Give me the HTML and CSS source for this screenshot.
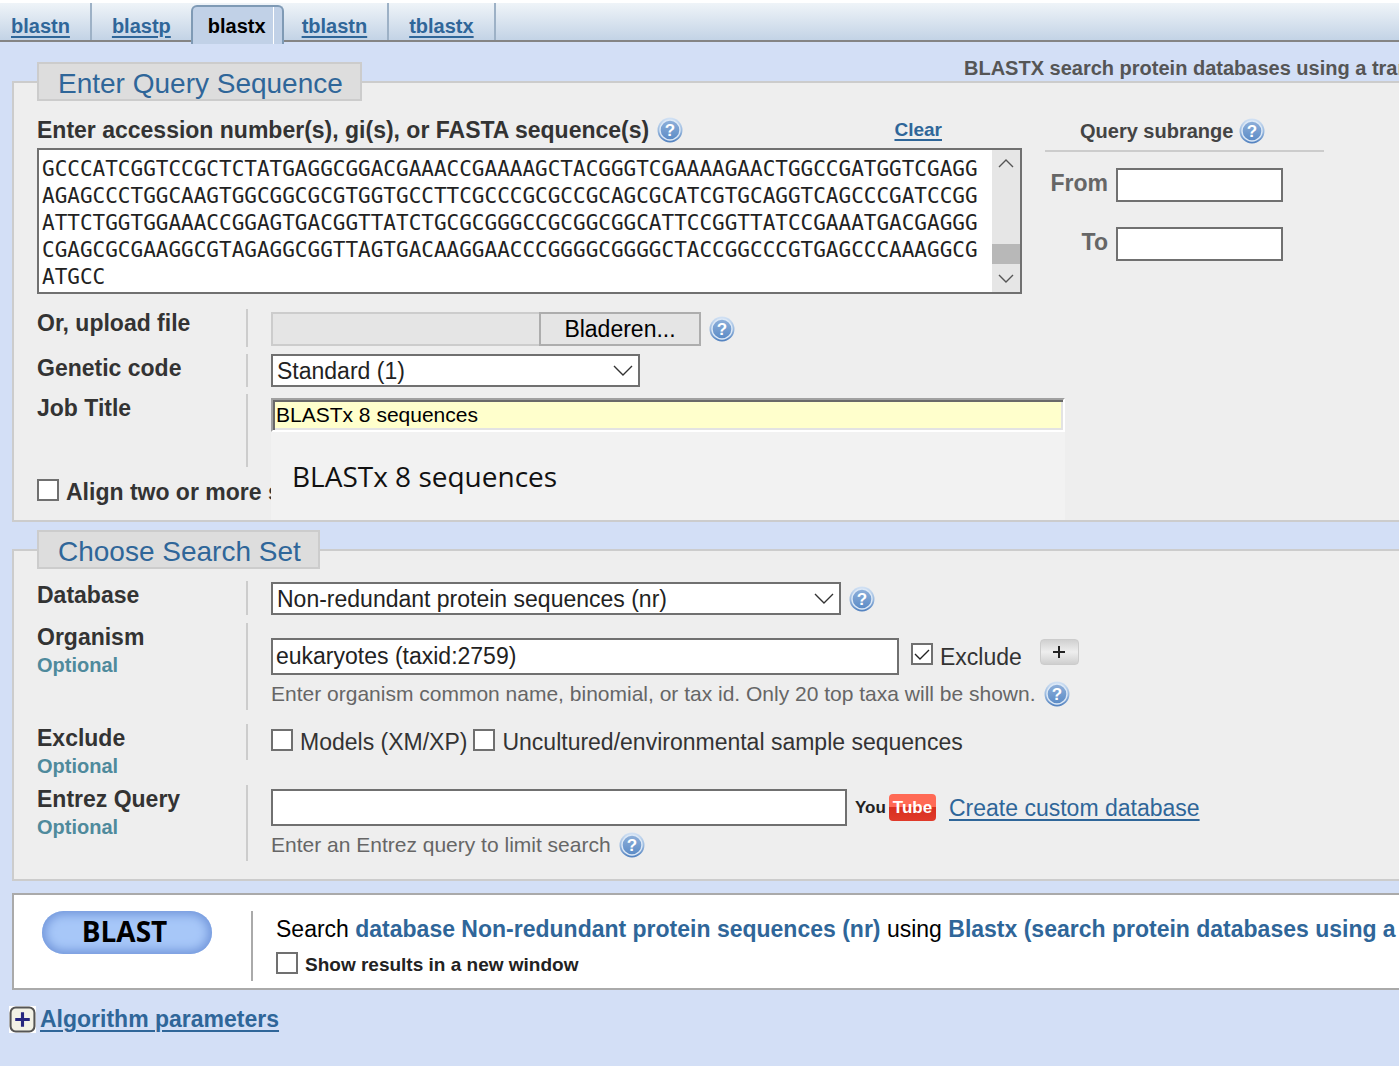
FILE: index.html
```html
<!DOCTYPE html>
<html lang="en">
<head>
<meta charset="utf-8">
<title>BLASTX search</title>
<link rel="stylesheet" href="styles.css">
</head>
<body>
<svg class="defs" aria-hidden="true">
  <defs>
    <linearGradient id="ring" x1="0" y1="0" x2="0" y2="1">
      <stop offset="0" stop-color="#d3e2f4"/><stop offset=".5" stop-color="#9dbce0"/><stop offset="1" stop-color="#4f7fbe"/>
    </linearGradient>
    <linearGradient id="disc" x1="0" y1="0" x2="0" y2="1">
      <stop offset="0" stop-color="#8fb0da"/><stop offset="1" stop-color="#5b8bc6"/>
    </linearGradient>
    <symbol id="help" viewBox="0 0 26 26">
      <circle cx="13" cy="13" r="12.5" fill="url(#ring)"/>
      <circle cx="13" cy="13" r="10" fill="url(#disc)" stroke="#dce8f6" stroke-width="1.4"/>
      <text x="13" y="19" text-anchor="middle" class="help-mark">?</text>
    </symbol>
  </defs>
</svg>

<nav class="tabs">
  <a class="tab" href="#blastn">blastn</a>
  <a class="tab tab-before" href="#blastp">blastp</a>
  <a class="tab tab-active" href="#blastx">blastx</a>
  <a class="tab tab-after" href="#tblastn">tblastn</a>
  <a class="tab" href="#tblastx">tblastx</a>
</nav>

<form class="page">
  <p class="note">BLASTX search protein databases using a translated nucleotide query</p>

  <fieldset class="section">
    <legend>Enter Query Sequence</legend>
    <div class="query">
      <div class="query-main">
        <div class="query-head">
          <label for="seq">Enter accession number(s), gi(s), or FASTA sequence(s)</label>
          <svg class="help"><use href="#help"/></svg>
          <a class="clear" href="#clear">Clear</a>
        </div>
        <div class="seq-box">
          <textarea id="seq" spellcheck="false">GCCCATCGGTCCGCTCTATGAGGCGGACGAAACCGAAAAGCTACGGGTCGAAAAGAACTGGCCGATGGTCGAGG
AGAGCCCTGGCAAGTGGCGGCGCGTGGTGCCTTCGCCCGCGCCGCAGCGCATCGTGCAGGTCAGCCCGATCCGG
ATTCTGGTGGAAACCGGAGTGACGGTTATCTGCGCGGGCCGCGGCGGCATTCCGGTTATCCGAAATGACGAGGG
CGAGCGCGAAGGCGTAGAGGCGGTTAGTGACAAGGAACCCGGGGCGGGGCTACCGGCCCGTGAGCCCAAAGGCG
ATGCC</textarea>
          <div class="scrollbar" aria-hidden="true">
            <svg class="arrow" viewBox="0 0 16 10"><path d="M1 9 8 2l7 7"/></svg>
            <span class="thumb"></span>
            <svg class="arrow" viewBox="0 0 16 10"><path d="M1 1l7 7 7-7"/></svg>
          </div>
        </div>
      </div>
      <div class="subrange">
        <div class="subrange-head">Query subrange <svg class="help"><use href="#help"/></svg></div>
        <div class="subrange-row"><label for="from">From</label><input class="box" id="from" type="text"></div>
        <div class="subrange-row"><label for="to">To</label><input class="box" id="to" type="text"></div>
      </div>
    </div>

    <div class="rows rows-query">
      <label class="name" for="file">Or, upload file</label>
      <div class="field field-file">
        <div class="line">
          <input class="file-name" id="file" type="text" readonly><button class="browse" type="button">Bladeren...</button>
          <svg class="help"><use href="#help"/></svg>
        </div>
      </div>

      <label class="name" for="code">Genetic code</label>
      <div class="field">
        <div class="select select-code">
          <select id="code"><option>Standard (1)</option></select>
          <svg class="chevron" viewBox="0 0 20 11"><path d="M1 1l9 9 9-9"/></svg>
        </div>
      </div>

      <label class="name" for="title">Job Title</label>
      <div class="field field-title">
        <input class="title" id="title" type="text" value="BLASTx 8 sequences">
        <div class="suggest">BLASTx 8 sequences</div>
      </div>
    </div>
    <label class="align"><input type="checkbox"> Align two or more sequences</label>
  </fieldset>

  <fieldset class="section">
    <legend>Choose Search Set</legend>
    <div class="rows rows-set">
      <label class="name" for="db">Database</label>
      <div class="field field-db">
        <div class="line">
          <div class="select select-db">
            <select id="db"><option>Non-redundant protein sequences (nr)</option></select>
            <svg class="chevron" viewBox="0 0 20 11"><path d="M1 1l9 9 9-9"/></svg>
          </div>
          <svg class="help"><use href="#help"/></svg>
        </div>
      </div>

      <label class="name" for="org">Organism <span class="optional">Optional</span></label>
      <div class="field field-org">
        <div class="line line-org">
          <input class="box box-org" id="org" type="text" value="eukaryotes (taxid:2759)">
          <label class="check"><input type="checkbox" checked> Exclude</label>
          <button class="add" type="button" aria-label="Add organism"><svg viewBox="0 0 14 14"><path d="M7 1v12M1 7h12"/></svg></button>
        </div>
        <div class="hint">Enter organism common name, binomial, or tax id. Only 20 top taxa will be shown. <svg class="help"><use href="#help"/></svg></div>
      </div>

      <div class="name">Exclude <span class="optional">Optional</span></div>
      <div class="field field-exclude">
        <div class="line line-checks">
          <label class="check"><input type="checkbox"> Models (XM/XP)</label>
          <label class="check"><input type="checkbox"> Uncultured/environmental sample sequences</label>
        </div>
      </div>

      <label class="name" for="entrez">Entrez Query <span class="optional">Optional</span></label>
      <div class="field field-entrez">
        <div class="line">
          <input class="box box-entrez" id="entrez" type="text">
          <a class="youtube" href="#youtube">You<span class="tube">Tube</span></a>
          <a class="custom" href="#custom">Create custom database</a>
        </div>
        <div class="hint">Enter an Entrez query to limit search <svg class="help"><use href="#help"/></svg></div>
      </div>
    </div>
  </fieldset>

  <div class="submit">
    <button class="blast" type="button">BLAST</button>
    <div class="summary">
      <div class="summary-text">Search <b>database Non-redundant protein sequences (nr)</b> using <b>Blastx (search protein databases using a translated nucleotide query)</b></div>
      <label class="new-window"><input type="checkbox"> Show results in a new window</label>
    </div>
  </div>

  <a class="params" href="#params">
    <svg class="expand" viewBox="0 0 26 26"><rect width="26" height="26" fill="#fff"/><rect x="1.5" y="1.5" width="23" height="23" rx="5" fill="#f3f2e6" stroke="#555" stroke-width="2"/><path d="M13 6v14M6 13h14" stroke="#27277f" stroke-width="3"/></svg>
    <span>Algorithm parameters</span>
  </a>
</form>
</body>
</html>
```
FILE: styles.css
```css
* { box-sizing: border-box; }

body {
  margin: 0;
  min-height: 100vh;
  overflow-x: hidden;
  background: #d3dff6;
  color: #333;
  font: 23px/28px "Liberation Sans", Arial, sans-serif;
}

input, select, textarea, button { margin: 0; font: inherit; color: inherit; border-radius: 0; }
a { color: #2f6699; text-decoration-thickness: 2px; text-underline-offset: 3px; }

.defs { position: absolute; width: 0; height: 0; }
.help { flex: none; width: 26px; height: 26px; }
.help-mark { font: bold 17px "Liberation Sans", Arial, sans-serif; fill: #fff; }

/* Program tabs */
.tabs {
  display: flex;
  height: 42px;
  border-top: 3px solid #fff;
  border-bottom: 2px solid #848484;
  background: linear-gradient(#eff4f8, #c3d3e6);
  font-size: 20px;
  font-weight: bold;
}
.tab { padding: 9px 20px 0; border-right: 2px solid #9db1c6; }
.tab:first-child { padding-left: 11px; }
.tab-before { border-right: 0; }
.tab-after { padding-left: 18px; }
.tab-active {
  height: 39px;
  margin-top: 2px;
  padding: 5px 16px 0 15px;
  border: 2px solid #7f9ab5;
  border-bottom: 0;
  border-radius: 6px 6px 0 0;
  background: linear-gradient(#fff, #fff) right 8px top / 1px 100% no-repeat #c1d1e7;
  color: #000;
  text-decoration: none;
}

.page { padding-left: 12px; overflow: hidden; }
.note {
  margin: 12px 0 -20px 952px;
  color: #555;
  font-size: 20px;
  font-weight: bold;
  white-space: nowrap;
}

/* Sections */
.section {
  min-width: 0;
  margin: 0 0 8px;
  padding: 0 0 14px 23px;
  border: 2px solid #ccc;
  border-right: 0;
  background: #eee;
}
legend {
  padding: 5px 17px 0 19px;
  border: 2px solid #ccc;
  background: #ddd;
  color: #2f6699;
  font-size: 28px;
  line-height: 30px;
}

.query { display: grid; grid-template-columns: minmax(0, 985px) 279px; gap: 23px; padding-top: 11px; }
.query-head { display: flex; align-items: center; gap: 8px; height: 36px; padding-bottom: 1px; font-weight: bold; white-space: nowrap; }
.clear { margin-left: auto; margin-right: 80px; font-size: 19px; }
.seq-box { display: flex; height: 146px; border: 2px solid #707070; background: #fff; }
.seq-box textarea {
  flex: 1;
  min-width: 0;
  padding: 6px 3px 0;
  border: 0;
  background: none;
  color: #222;
  font: 21px/27px "DejaVu Sans Mono", monospace;
  white-space: pre;
  resize: none;
  overflow: hidden;
}
.scrollbar { display: flex; flex-direction: column; align-items: center; width: 28px; padding: 8px 0; background: #e6e6e6; }
.arrow { width: 16px; height: 10px; fill: none; stroke: #555; stroke-width: 1.4; }
.thumb { width: 100%; height: 20px; margin: auto 0 10px; background: #b8b8b8; }

.subrange-head {
  display: flex;
  align-items: center;
  gap: 6px;
  height: 40px;
  padding: 0 0 1px 35px;
  border-bottom: 2px solid #ccc;
  color: #444;
  font-size: 20px;
  font-weight: bold;
}
.subrange-row { display: flex; gap: 8px; height: 34px; margin-top: 16px; }
.subrange-row + .subrange-row { margin-top: 25px; }
.subrange-row label { width: 63px; padding-top: 1px; text-align: right; color: #666; font-weight: bold; }
.subrange-row input { width: 167px; }

.box { padding: 0 3px; border: 2px solid #707070; background: #fff; color: #222; }

.rows { display: grid; grid-template-columns: 209px minmax(0, 1fr); align-items: start; }
.rows-query { row-gap: 7px; padding-top: 15px; }
.name { font-weight: bold; }
.optional { display: block; color: #4f8a9c; font-size: 20px; }
.field { padding-left: 23px; border-left: 2px solid #ccc; }
.line { display: flex; align-items: center; gap: 8px; white-space: nowrap; }

.field-file { padding-top: 3px; height: 38px; }
.file-name { width: 268px; height: 34px; border: 2px solid #ccc; border-right: 0; background: #e5e5e5; }
.browse { width: 162px; height: 34px; margin-left: -8px; padding: 0; border: 2px solid #adadad; background: #e5e5e5; color: #000; }

.select { position: relative; height: 33px; }
.select select { width: 100%; height: 100%; padding: 0 4px; border: 2px solid #707070; background: #fff; color: #222; appearance: none; }
.select-code { width: 369px; }
.select-db { width: 570px; }
.chevron { position: absolute; right: 7px; top: 11px; width: 20px; height: 11px; fill: none; stroke: #333; stroke-width: 1.4; pointer-events: none; }

.field-title { position: relative; height: 73px; padding-top: 4px; }
.title {
  display: block;
  width: 794px;
  height: 34px;
  padding: 0 3px;
  border: 2px solid;
  border-color: #a0a0a0 #fff #fff #a0a0a0;
  box-shadow: inset 2px 2px #696969, inset -2px -2px #e3e3e3;
  background: #ffc;
  color: #000;
  font-size: 21px;
}
.suggest {
  position: absolute;
  left: 23px;
  top: 38px;
  width: 794px;
  height: 88px;
  padding: 24px 21px;
  background: #f2f2f2;
  color: #111;
  font: 28px/40px "Open Sans", "Noto Sans", sans-serif;
}

input[type="checkbox"] {
  flex: none;
  width: 22px;
  height: 22px;
  margin-bottom: 5px;
  border: 2px solid #707070;
  background: #fff;
  appearance: none;
}
input[type="checkbox"]:checked {
  background: #fff url("data:image/svg+xml,%3Csvg xmlns='http://www.w3.org/2000/svg' viewBox='0 0 18 18'%3E%3Cpath d='M2 9l5 5 9-9' fill='none' stroke='%23222' stroke-width='1.4'/%3E%3C/svg%3E");
}
.align { display: flex; align-items: center; gap: 7px; margin-top: 11px; font-weight: bold; }
.check { display: flex; align-items: center; gap: 7px; }

.rows-set { padding-top: 12px; padding-bottom: 4px; }
.rows-set .name { min-height: 42px; }
.field-db { height: 34px; padding-top: 1px; }
.field-org { height: 87px; padding-top: 15px; margin-bottom: 14px; }
.line-org { gap: 12px; }
.box-org { width: 628px; height: 37px; }
.add {
  width: 39px;
  height: 26px;
  margin: 0 0 10px 6px;
  padding: 0;
  border: 1px solid #ccc;
  border-radius: 4px;
  background: linear-gradient(#d0d0d0, #eee 50%, #cfcfcf);
  line-height: 0;
}
.add svg { width: 14px; height: 14px; fill: none; stroke: #222; stroke-width: 2; }
.hint { display: flex; align-items: center; gap: 8px; margin-top: 5px; color: #666; font-size: 21px; white-space: nowrap; }
.field-exclude { height: 36px; margin-bottom: 25px; padding-top: 4px; }
.line-checks { gap: 6px; }
.field-entrez { height: 76px; padding-top: 4px; }
.box-entrez { width: 576px; height: 37px; }
.youtube {
  display: flex;
  align-items: center;
  gap: 3px;
  width: 86px;
  color: #222;
  font: bold 17px/27px "Liberation Sans", Arial, sans-serif;
  text-decoration: none;
}
.tube { padding: 0 4px; border-radius: 4px; background: linear-gradient(#ff6a55 50%, #d8301f 50%, #e03a2a); color: #fff; }

/* Submit bar */
.submit {
  display: flex;
  margin-top: 12px;
  padding: 16px 0 7px 28px;
  border: 2px solid #aaa;
  border-right: 0;
  background: #fff;
}
.blast {
  flex: none;
  width: 170px;
  height: 43px;
  margin-right: 39px;
  padding: 0 5px 3px 0;
  border: 0;
  border-radius: 22px;
  background: #a7c7f8;
  box-shadow: inset 0 0 10px 4px #7599dc;
  color: #000;
  font: bold 28px/40px "Open Sans", sans-serif;
}
.summary { flex: none; height: 70px; padding: 4px 0 0 23px; border-left: 2px solid #aaa; color: #000; white-space: nowrap; }
.summary b { color: #2f6699; }
.new-window { display: flex; align-items: center; gap: 7px; margin-top: 8px; color: #222; font-size: 19px; font-weight: bold; }

.params { display: inline-flex; align-items: center; gap: 4px; margin: 15px 0 30px -3px; font-weight: bold; }
.expand { width: 27px; height: 27px; }
```
